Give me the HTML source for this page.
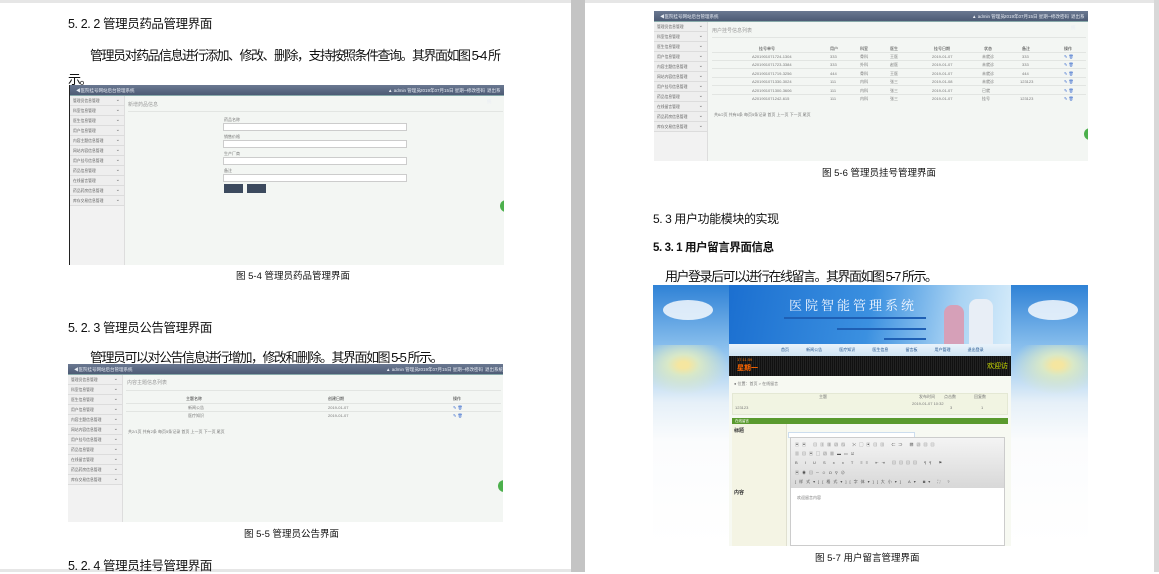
<!DOCTYPE html>
<html><head><meta charset="utf-8">
<style>
*{margin:0;padding:0;box-sizing:border-box}
body{width:1159px;height:572px;background:#fff;position:relative;overflow:hidden;font-family:"Liberation Sans","Noto Sans CJK SC",sans-serif;color:#111}
.a{position:absolute}
.h{font-size:12.5px;letter-spacing:-0.4px;white-space:nowrap}
.p{font-size:13px;letter-spacing:-1.5px;white-space:nowrap}
.cap{font-size:9.5px;color:#111;white-space:nowrap}
.shot{position:absolute;background:#f3f6f3;overflow:hidden}
.hd{position:absolute;left:0;right:0;top:0;height:11px;background:linear-gradient(#6a7891,#4d5b75);color:#e8ecf3;font-size:4.5px;line-height:11px;padding-left:6px;border-bottom:1px solid #8aa}
.hd span{position:absolute;top:0}
.sb{position:absolute;left:0;top:11px;width:55px;bottom:0;background:#f2f2f2;border-right:1px solid #ddd}
.sb div{height:10px;border-bottom:1px solid #dcdcdc;background:#eee;font-size:3.8px;line-height:10px;padding-left:3px;color:#666;position:relative}
.sb div:after{content:"⌄";position:absolute;right:4px;top:-1px;font-size:5px;color:#666}
.t{position:absolute;font-size:4px;color:#777;white-space:nowrap}
.ln{position:absolute;height:1px;background:#e2e5e2}
.gc{position:absolute;width:8px;height:12px;border-radius:6px 0 0 6px;background:#4cb04c}
</style></head><body>
<div class="a" style="left:0;top:0;width:1159px;height:3px;background:#e6e6e6"></div>
<div class="a" style="left:571px;top:0;width:14px;height:572px;background:#c4c4c4"></div>
<div class="a" style="left:1154px;top:0;width:5px;height:572px;background:#d8d8d8"></div>
<div class="a" style="left:0;top:569px;width:571px;height:3px;background:#e6e6e6"></div>

<div class="a h" style="left:68px;top:13px">5. 2. 2 管理员药品管理界面</div>
<div class="a p" style="left:90px;top:45px">管理员对药品信息进行添加、修改、删除，支持按照条件查询。其界面如图 5-4 所</div>
<div class="a p" style="left:68px;top:69px">示。</div>

<div class="shot" style="left:69px;top:85px;width:435px;height:180px;border-left:1px solid #222">
 <div class="hd">◀医院挂号网站后台管理系统<span style="left:318px">▲ admin 管理员</span><span style="left:350px">2019年07月15日 星期一</span><span style="left:397px">修改密码</span><span style="left:417px">退出系统</span></div>
 <div class="sb"><div>管理员信息管理</div><div>科室信息管理</div><div>医生信息管理</div><div>用户信息管理</div><div>内容主题信息管理</div><div>网站内容信息管理</div><div>用户挂号信息管理</div><div>药品信息管理</div><div>在线留言管理</div><div>药品药房信息管理</div><div>库存交易信息管理</div></div>
 <div class="t" style="left:58px;top:16px;font-size:5px;color:#999">新增药品信息</div>
 <div class="ln" style="left:58px;top:26px;width:375px"></div>
 <div class="t" style="left:154px;top:32px">药品名称</div>
 <div class="a" style="left:153px;top:38px;width:184px;height:8px;border:1px solid #ccc;background:#fff"></div>
 <div class="t" style="left:154px;top:49px">销售价格</div>
 <div class="a" style="left:153px;top:55px;width:184px;height:8px;border:1px solid #ccc;background:#fff"></div>
 <div class="t" style="left:154px;top:66px">生产厂商</div>
 <div class="a" style="left:153px;top:72px;width:184px;height:8px;border:1px solid #ccc;background:#fff"></div>
 <div class="t" style="left:154px;top:83px">备注</div>
 <div class="a" style="left:153px;top:89px;width:184px;height:8px;border:1px solid #ccc;background:#fff"></div>
 <div class="a" style="left:154px;top:99px;width:19px;height:9px;background:#3c4a5e"></div>
 <div class="a" style="left:177px;top:99px;width:19px;height:9px;background:#3c4a5e"></div>
 <div class="gc" style="left:430px;top:115px"></div>
</div>
<div class="a cap" style="left:236px;top:268px">图 5-4 管理员药品管理界面</div>

<div class="a h" style="left:68px;top:317px">5. 2. 3 管理员公告管理界面</div>
<div class="a p" style="left:90px;top:347px">管理员可以对公告信息进行增加，修改和删除。其界面如图 5-5 所示。</div>

<div class="shot" style="left:68px;top:364px;width:435px;height:158px">
 <div class="hd">◀医院挂号网站后台管理系统<span style="left:318px">▲ admin 管理员</span><span style="left:350px">2019年07月15日 星期一</span><span style="left:397px">修改密码</span><span style="left:417px">退出系统</span></div>
 <div class="sb"><div>管理员信息管理</div><div>科室信息管理</div><div>医生信息管理</div><div>用户信息管理</div><div>内容主题信息管理</div><div>网站内容信息管理</div><div>用户挂号信息管理</div><div>药品信息管理</div><div>在线留言管理</div><div>药品药房信息管理</div><div>库存交易信息管理</div></div>
 <div class="t" style="left:59px;top:15px;font-size:5px;color:#999">内容主题信息列表</div>
 <div class="ln" style="left:58px;top:26px;width:375px"></div>
 <div class="t" style="left:118px;top:32px;color:#333">主题名称</div><div class="t" style="left:260px;top:32px;color:#333">创建日期</div><div class="t" style="left:385px;top:32px;color:#333">操作</div>
 <div class="ln" style="left:58px;top:39px;width:375px"></div>
 <div class="t" style="left:120px;top:41px">新闻公告</div><div class="t" style="left:260px;top:41px">2019-01-07</div><div class="t" style="left:385px;top:41px;color:#36c">✎ 🗑</div>
 <div class="ln" style="left:58px;top:47px;width:375px"></div>
 <div class="t" style="left:120px;top:49px">医疗知识</div><div class="t" style="left:260px;top:49px">2019-01-07</div><div class="t" style="left:385px;top:49px;color:#36c">✎ 🗑</div>
 <div class="t" style="left:60px;top:65px">共2/1页 共有2条 每页5条记录 首页 上一页 下一页 尾页</div>
 <div class="gc" style="left:430px;top:116px"></div>
</div>
<div class="a cap" style="left:244px;top:526px">图 5-5 管理员公告界面</div>
<div class="a h" style="left:68px;top:555px">5. 2. 4 管理员挂号管理界面</div>

<div class="shot" style="left:654px;top:11px;width:434px;height:150px">
 <div class="hd">◀医院挂号网站后台管理系统<span style="left:318px">▲ admin 管理员</span><span style="left:350px">2019年07月15日 星期一</span><span style="left:397px">修改密码</span><span style="left:417px">退出系统</span></div>
 <div class="sb" style="width:54px"><div>管理员信息管理</div><div>科室信息管理</div><div>医生信息管理</div><div>用户信息管理</div><div>内容主题信息管理</div><div>网站内容信息管理</div><div>用户挂号信息管理</div><div>药品信息管理</div><div>在线留言管理</div><div>药品药房信息管理</div><div>库存交易信息管理</div></div>
 <div class="t" style="left:58px;top:16px;font-size:5px;color:#999">用户挂号信息列表</div>
 <div class="ln" style="left:58px;top:26px;width:374px"></div>
 <div class="t" style="left:105px;top:35px;color:#333">挂号单号</div><div class="t" style="left:176px;top:35px;color:#333">用户</div><div class="t" style="left:206px;top:35px;color:#333">科室</div><div class="t" style="left:236px;top:35px;color:#333">医生</div><div class="t" style="left:280px;top:35px;color:#333">挂号日期</div><div class="t" style="left:330px;top:35px;color:#333">状态</div><div class="t" style="left:368px;top:35px;color:#333">备注</div><div class="t" style="left:410px;top:35px;color:#333">操作</div>
 <div class="ln" style="left:58px;top:41px;width:374px"></div>
 <div class="t" style="left:98px;top:43px">A201901071724-1304</div><div class="t" style="left:176px;top:43px">333</div><div class="t" style="left:206px;top:43px">骨科</div><div class="t" style="left:236px;top:43px">王医</div><div class="t" style="left:278px;top:43px">2019-01-07</div><div class="t" style="left:328px;top:43px">未就诊</div><div class="t" style="left:368px;top:43px">333</div><div class="t" style="left:410px;top:43px;color:#36c">✎ 🗑</div>
 <div class="ln" style="left:58px;top:49px;width:374px"></div>
 <div class="t" style="left:98px;top:51px">A201901071723-3384</div><div class="t" style="left:176px;top:51px">333</div><div class="t" style="left:206px;top:51px">外科</div><div class="t" style="left:236px;top:51px">赵医</div><div class="t" style="left:278px;top:51px">2019-01-07</div><div class="t" style="left:328px;top:51px">未就诊</div><div class="t" style="left:368px;top:51px">333</div><div class="t" style="left:410px;top:51px;color:#36c">✎ 🗑</div>
 <div class="ln" style="left:58px;top:57px;width:374px"></div>
 <div class="t" style="left:98px;top:60px">A201901071719-3256</div><div class="t" style="left:176px;top:60px">444</div><div class="t" style="left:206px;top:60px">骨科</div><div class="t" style="left:236px;top:60px">王医</div><div class="t" style="left:278px;top:60px">2019-01-07</div><div class="t" style="left:328px;top:60px">未就诊</div><div class="t" style="left:368px;top:60px">444</div><div class="t" style="left:410px;top:60px;color:#36c">✎ 🗑</div>
 <div class="ln" style="left:58px;top:66px;width:374px"></div>
 <div class="t" style="left:98px;top:68px">A201901071330-3024</div><div class="t" style="left:176px;top:68px">111</div><div class="t" style="left:206px;top:68px">内科</div><div class="t" style="left:236px;top:68px">张三</div><div class="t" style="left:278px;top:68px">2019-01-08</div><div class="t" style="left:328px;top:68px">未就诊</div><div class="t" style="left:366px;top:68px">123123</div><div class="t" style="left:410px;top:68px;color:#36c">✎ 🗑</div>
 <div class="ln" style="left:58px;top:74px;width:374px"></div>
 <div class="t" style="left:98px;top:77px">A201901071300-3606</div><div class="t" style="left:176px;top:77px">111</div><div class="t" style="left:206px;top:77px">内科</div><div class="t" style="left:236px;top:77px">张三</div><div class="t" style="left:278px;top:77px">2019-01-07</div><div class="t" style="left:328px;top:77px">已就</div><div class="t" style="left:410px;top:77px;color:#36c">✎ 🗑</div>
 <div class="ln" style="left:58px;top:83px;width:374px"></div>
 <div class="t" style="left:98px;top:85px">A201901071242-615</div><div class="t" style="left:176px;top:85px">111</div><div class="t" style="left:206px;top:85px">内科</div><div class="t" style="left:236px;top:85px">张三</div><div class="t" style="left:278px;top:85px">2019-01-07</div><div class="t" style="left:328px;top:85px">挂号</div><div class="t" style="left:366px;top:85px">123123</div><div class="t" style="left:410px;top:85px;color:#36c">✎ 🗑</div>
 <div class="t" style="left:60px;top:101px">共6/2页 共有6条 每页5条记录 首页 上一页 下一页 尾页</div>
 <div class="gc" style="left:430px;top:117px"></div>
</div>
<div class="a cap" style="left:822px;top:165px">图 5-6 管理员挂号管理界面</div>

<div class="a h" style="left:653px;top:210px;font-size:12px">5. 3 用户功能模块的实现</div>
<div class="a h" style="left:653px;top:239px;font-weight:bold;font-size:11.5px">5. 3. 1 用户留言界面信息</div>
<div class="a p" style="left:665px;top:266px">用户登录后可以进行在线留言。其界面如图 5-7 所示。</div>

<div class="a" style="left:653px;top:285px;width:435px;height:261px;overflow:hidden;background:linear-gradient(#2f82d6 0%,#8ec2ee 25%,#e6f0f8 45%,#fbfcfd 60%,#fff 100%)">
 <div class="a" style="left:10px;top:15px;width:50px;height:20px;border-radius:50%;background:rgba(255,255,255,0.8)"></div>
 <div class="a" style="left:375px;top:15px;width:50px;height:20px;border-radius:50%;background:rgba(255,255,255,0.8)"></div>
 <div class="a" style="left:0;top:60px;width:76px;height:50px;background:radial-gradient(ellipse at 40% 40%,#f5e6a0 0 8%,#d8e8c8 25%,rgba(255,255,255,0) 70%)"></div>
 <div class="a" style="left:359px;top:60px;width:76px;height:50px;background:radial-gradient(ellipse at 60% 40%,#f5e6a0 0 8%,#d8e8c8 25%,rgba(255,255,255,0) 70%)"></div>
 <div class="a" style="left:76px;top:0;width:282px;height:261px;background:#f7f9f2">
  <div class="a" style="left:0;top:0;width:282px;height:59px;background:linear-gradient(100deg,#1b6fd0,#3b90e0 50%,#a9d3f3 80%,#d7ecfa)"></div>
  <div class="a" style="left:60px;top:10px;font-family:'Noto Serif CJK SC',serif;font-size:13px;color:#f4f8ff;letter-spacing:3px">医院智能管理系统</div>
  <div class="a" style="left:55px;top:32px;width:142px;height:2px;background:#1e5fb4"></div>
  <div class="a" style="left:108px;top:43px;width:89px;height:2px;background:#1e5fb4"></div>
  <div class="a" style="left:155px;top:53px;width:42px;height:2px;background:#1e5fb4"></div>
  <div class="a" style="left:215px;top:20px;width:20px;height:39px;background:#d6a0b8;border-radius:8px 8px 0 0"></div>
  <div class="a" style="left:240px;top:14px;width:24px;height:45px;background:#e8eef6;border-radius:8px 8px 0 0"></div>
  <div class="a" style="left:0;top:59px;width:282px;height:12px;background:linear-gradient(#e9f3fb,#cfe3f3);font-size:4px;color:#1d4f8a;line-height:12px;padding-left:52px;word-spacing:16px">首页 新闻公告 医疗知识 医生信息 留言板 用户管理 退出登录</div>
  <div class="a" style="left:0;top:71px;width:282px;height:20px;background:#111 repeating-linear-gradient(90deg,#222 0 1px,transparent 1px 2px)"></div>
  <div class="a" style="left:8px;top:72px;font-size:4px;color:#f70">17:11:59</div>
  <div class="a" style="left:8px;top:78px;font-size:7px;color:#f60;font-weight:bold">星期一</div>
  <div class="a" style="left:258px;top:76px;font-size:7px;color:#cd0">欢迎访</div>
  <div class="t" style="left:5px;top:96px">● 位置：首页 &gt; 在线留言</div>
  <div class="a" style="left:3px;top:108px;width:276px;height:22px;background:#f1f4e2;border:1px solid #e4e8d4"></div>
  <div class="t" style="left:90px;top:109px">主题</div><div class="t" style="left:190px;top:109px">发布时间</div><div class="t" style="left:215px;top:109px">点击数</div><div class="t" style="left:245px;top:109px">回复数</div>
  <div class="t" style="left:6px;top:120px">123123</div><div class="t" style="left:183px;top:116px">2019-01-07 10:32</div><div class="t" style="left:221px;top:120px">3</div><div class="t" style="left:252px;top:120px">1</div>
  <div class="a" style="left:3px;top:133px;width:276px;height:6px;background:#5a9a2e;font-size:3.5px;color:#fff;padding-left:3px;line-height:6px">在线留言</div>
  <div class="a" style="left:3px;top:139px;width:55px;height:122px;background:#f4f4e4;border-right:1px solid #e0e0d0"></div>
  <div class="t" style="left:5px;top:142px;color:#333;font-size:5px;font-weight:bold">标题</div>
  <div class="t" style="left:5px;top:204px;color:#333;font-size:5px;font-weight:bold">内容</div>
  <div class="a" style="left:59px;top:147px;width:127px;height:6px;border:1px solid #cde;background:#fff"></div>
  <div class="a" style="left:61px;top:152px;width:215px;height:109px;border:1px solid #ccc;background:#fff"></div>
  <div class="a" style="left:62px;top:153px;width:213px;height:50px;background:linear-gradient(#f4f4f4,#d8d8d8);font-size:4px;color:#555;line-height:9.2px;padding:2px 4px;letter-spacing:3px">▣▣ ▤▥▦▧▨ ✂▢▣▤▥ ⇐⇒ ▩▧▥▤<br>▥▤▣▢▧▦▬▭☑<br>B I U S x x T ≡≡ ⇤⇥ ▤▤▤▤ ¶¶ ⚑<br>▣◉▤─☺Ω⚲⊘<br>[样式▾][格式▾][字体▾][大小▾] A▾ ◙▾ ⛶ ?</div>
  <div class="t" style="left:68px;top:210px">欢迎留言内容</div>
 </div>
</div>
<div class="a cap" style="left:815px;top:550px">图 5-7 用户留言管理界面</div>
</body></html>
